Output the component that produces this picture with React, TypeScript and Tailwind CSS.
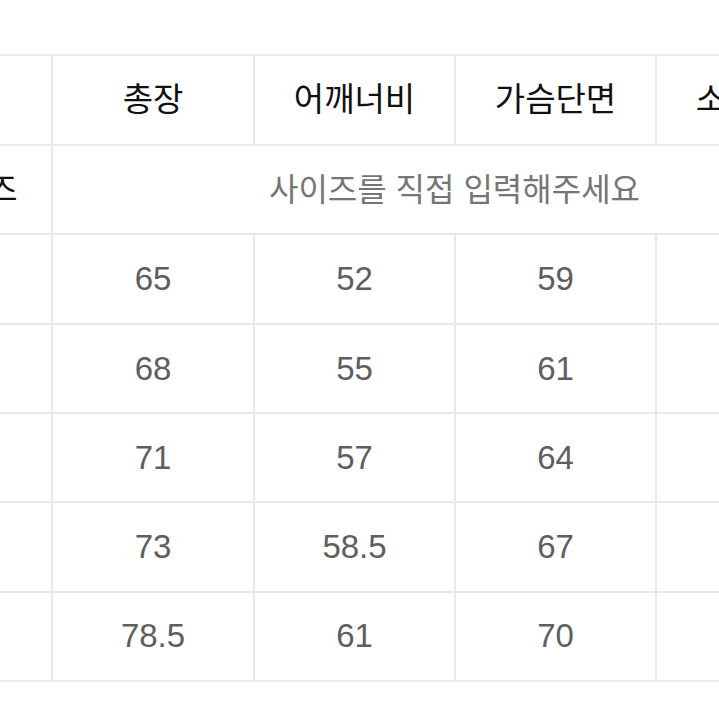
import React from "react";

const rows: string[][] = [
  ["S", "65", "52", "59", "62"],
  ["M", "68", "55", "61", "63"],
  ["L", "71", "57", "64", "64"],
  ["XL", "73", "58.5", "67", "65"],
  ["2XL", "78.5", "61", "70", "66"],
];

const headers = ["총장", "어깨너비", "가슴단면", "소매길이"];

export default function App() {
  return (
    <div
      className="w-[719px] h-[719px] overflow-hidden bg-white"
      style={{ fontFamily: "'Liberation Sans', 'Noto Sans CJK KR', sans-serif" }}
    >
      <div className="pt-[54px] ml-[-117px]">
        <div className="grid w-max grid-cols-[166px_200px_199px_199px_199px] grid-rows-[88px_87.33px_87.33px_87.33px_87.33px_87.33px_87px] gap-[2px] p-[2px] bg-[#e9e9e9]">
          <div className="bg-white" />
          {headers.map((h) => (
            <div
              key={h}
              className="bg-white flex items-center justify-center text-[33px] text-[#111]"
            >
              {h}
            </div>
          ))}
          <div className="bg-white flex items-center justify-center pl-2 text-[33px] text-[#111]">
            사이즈
          </div>
          <div className="col-span-4 bg-white flex items-center justify-center text-[32px] text-[#757575]">
            사이즈를 직접 입력해주세요
          </div>
          {rows.map((r) =>
            r.map((c, i) => (
              <div
                key={r[0] + i}
                className={
                  "bg-white flex items-center justify-center text-[33px] " +
                  (i === 0 ? "text-[#111]" : "text-[#5e5e5e]")
                }
              >
                {c}
              </div>
            ))
          )}
        </div>
      </div>
    </div>
  );
}
